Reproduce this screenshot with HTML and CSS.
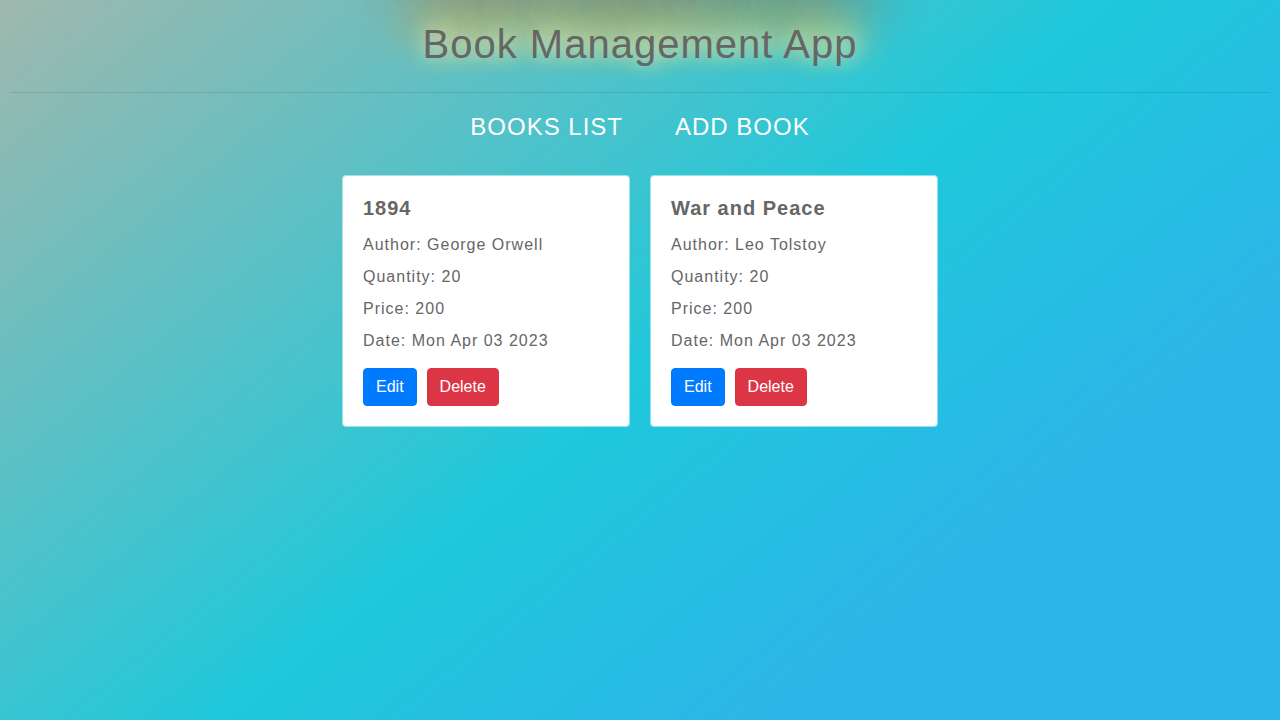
FILE: index.html
```html
<!DOCTYPE html>
<html lang="en">
<head>
<meta charset="utf-8">
<meta name="viewport" content="width=device-width, initial-scale=1">
<title>Book Management App</title>
<link rel="stylesheet" href="styles.css">
</head>
<body>
<div class="app">
  <header class="header">
    <h1 class="title">Book Management App</h1>
    <hr class="divider">
    <nav class="links">
      <a class="link" href="#books">Books List</a>
      <a class="link" href="#add">Add Book</a>
    </nav>
  </header>
  <main class="book-list">
    <article class="card">
      <h2 class="card-title">1894</h2>
      <div class="details">
        <p>Author: George Orwell</p>
        <p>Quantity: 20</p>
        <p>Price: 200</p>
        <p>Date: Mon Apr 03 2023</p>
      </div>
      <div class="actions">
        <button class="btn btn-primary" type="button">Edit</button>
        <button class="btn btn-danger" type="button">Delete</button>
      </div>
    </article>
    <article class="card">
      <h2 class="card-title">War and Peace</h2>
      <div class="details">
        <p>Author: Leo Tolstoy</p>
        <p>Quantity: 20</p>
        <p>Price: 200</p>
        <p>Date: Mon Apr 03 2023</p>
      </div>
      <div class="actions">
        <button class="btn btn-primary" type="button">Edit</button>
        <button class="btn btn-danger" type="button">Delete</button>
      </div>
    </article>
  </main>
</div>
</body>
</html>
```
FILE: styles.css
```css
* {
  box-sizing: border-box;
}

body {
  margin: 0;
  min-height: 100vh;
  font-family: "Liberation Sans", Arial, sans-serif;
  font-size: 16px;
  line-height: 24px;
  letter-spacing: 1px;
  color: #666;
  background: linear-gradient(141deg, #9fb8ad 0%, #1fc8db 51%, #2cb5e8 77%);
}

.app {
  padding: 20px 10px;
}

.header {
  text-align: center;
}

.title {
  margin: 0;
  font-size: 40px;
  font-weight: 400;
  line-height: 48px;
  text-shadow:
    0 0 20px rgba(254, 252, 201, 0.8),
    10px -10px 30px #feec85,
    -20px -20px 40px #ffae34,
    20px -40px 50px #ec862c,
    -20px -60px 60px #cd5626,
    0 -80px 70px #a75742,
    10px -90px 80px #655b5e;
}

.divider {
  margin: 24px 0 16px;
  border: 0;
  border-top: 1px solid rgba(0, 0, 0, 0.1);
}

.links {
  display: flex;
  justify-content: center;
  gap: 52px;
}

.link {
  color: #fff;
  font-size: 24px;
  line-height: 36px;
  text-decoration: none;
  text-transform: uppercase;
}

.book-list {
  display: flex;
  flex-wrap: wrap;
  justify-content: center;
  gap: 20px;
  margin-top: 30px;
}

.card {
  width: 288px;
  padding: 20px;
  border: 1px solid rgba(255, 255, 255, 0.5);
  border-radius: 4px;
  background: #fff;
  background-clip: padding-box;
}

.card-title {
  margin: 0 0 13px;
  font-size: 20px;
  font-weight: 700;
  line-height: 24px;
}

.details {
  display: grid;
  gap: 8px;
  margin-bottom: 15px;
}

.details p {
  margin: 0;
}

.actions {
  display: flex;
  gap: 10px;
}

.btn {
  padding: 6px 12px;
  border: 1px solid transparent;
  border-radius: 4px;
  color: #fff;
  font: 16px/24px "Liberation Sans", Arial, sans-serif;
  cursor: pointer;
}

.btn-primary {
  border-color: #007bff;
  background: #007bff;
}

.btn-danger {
  border-color: #dc3545;
  background: #dc3545;
}
```
